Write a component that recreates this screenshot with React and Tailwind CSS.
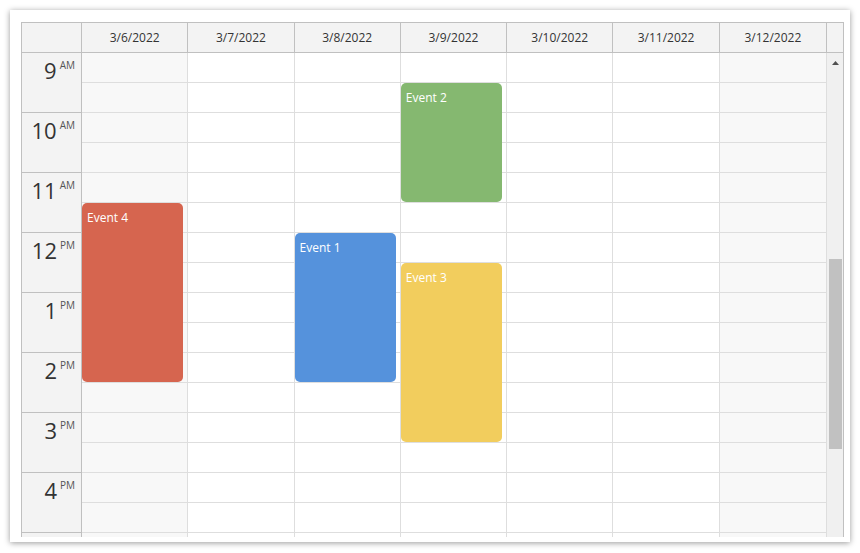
import React from 'react';

const days = ['3/6/2022', '3/7/2022', '3/8/2022', '3/9/2022', '3/10/2022', '3/11/2022', '3/12/2022'];
const hours = [
  { h: '9', p: 'AM' },
  { h: '10', p: 'AM' },
  { h: '11', p: 'AM' },
  { h: '12', p: 'PM' },
  { h: '1', p: 'PM' },
  { h: '2', p: 'PM' },
  { h: '3', p: 'PM' },
  { h: '4', p: 'PM' },
  { h: '', p: '' },
];

// start/end in half-hour slots from 9:00
const events = [
  { day: 0, start: 5, end: 11, text: 'Event 4', color: 'bg-[#d6654f]' },
  { day: 3, start: 1, end: 5, text: 'Event 2', color: 'bg-[#85b870]' },
  { day: 2, start: 6, end: 11, text: 'Event 1', color: 'bg-[#5592dc]' },
  { day: 3, start: 7, end: 13, text: 'Event 3', color: 'bg-[#f2cd5d]' },
];

export default function App() {
  return (
    <div className="w-[860px] h-[553px] bg-white pt-[10px] pl-[10px]" style={{ fontFamily: '"Open Sans", "Noto Sans", sans-serif' }}>
      <div className="w-[840px] h-[532px] bg-white shadow-[0_1px_6px_rgba(0,0,0,0.4)] pt-[12px] pl-[11px]">
        <div className="w-[823px] h-[515px] border-t border-x border-[#c0c0c0] flex flex-col overflow-hidden">
          {/* header */}
          <div className="flex h-[30px] shrink-0 bg-[#f3f3f3] border-b border-[#c0c0c0]">
            <div className="w-[60px] shrink-0 border-r border-[#c0c0c0]" />
            <div className="w-[744px] grid grid-cols-7">
              {days.map((d, i) => (
                <div key={d} className={`flex items-center justify-center pt-[1px] text-[12px] text-[#333] ${i < 6 ? 'border-r border-[#c0c0c0]' : ''}`}>
                  {d}
                </div>
              ))}
            </div>
            <div className="flex-1 border-l border-[#c0c0c0]" />
          </div>

          {/* body */}
          <div className="flex flex-1 overflow-hidden">
            <div className="w-[60px] shrink-0 bg-[#f3f3f3] border-r border-[#c0c0c0]">
              {hours.map((hr, i) => (
                <div key={i} className="h-[60px] border-b border-[#c0c0c0] flex justify-end pr-[6px] pt-[4px] text-[#333]">
                  <span className="text-[22px] leading-[26px]">{hr.h}</span>
                  <span className="text-[10px] leading-[12px] ml-[3px] mt-[2px] text-[#555]">{hr.p}</span>
                </div>
              ))}
            </div>

            <div className="w-[744px] grid grid-cols-7 relative">
              {days.map((d, di) => {
                const weekend = di === 0 || di === 6;
                return (
                  <div key={d} className={`relative ${di < 6 ? 'border-r border-[#dedede]' : ''}`}>
                    {Array.from({ length: 18 }).map((_, si) => (
                      <div key={si} className={`h-[30px] border-b border-[#dedede] ${weekend ? 'bg-[#f8f8f8]' : 'bg-white'}`} />
                    ))}
                    {events
                      .filter((e) => e.day === di)
                      .map((e) => (
                        <div
                          key={e.text}
                          className={`absolute left-0 w-[101px] rounded-[5px] ${e.color} text-white text-[12px] pl-[5px] pt-[7px] leading-[16px]`}
                          style={{ top: e.start * 30, height: e.end * 30 - e.start * 30 - 1 }}
                        >
                          {e.text}
                        </div>
                      ))}
                  </div>
                );
              })}
            </div>

            {/* scrollbar */}
            <div className="flex-1 bg-[#f0f0f0] border-l border-[#dedede] relative">
              <svg className="absolute left-[5px] top-[8px]" width="7" height="4" viewBox="0 0 7 4">
                <polygon points="3.5,0 7,4 0,4" fill="#505050" />
              </svg>
              <div className="absolute left-[2px] top-[206px] w-[13px] h-[190px] bg-[#c1c1c1]" />
            </div>
          </div>
        </div>
      </div>
    </div>
  );
}
